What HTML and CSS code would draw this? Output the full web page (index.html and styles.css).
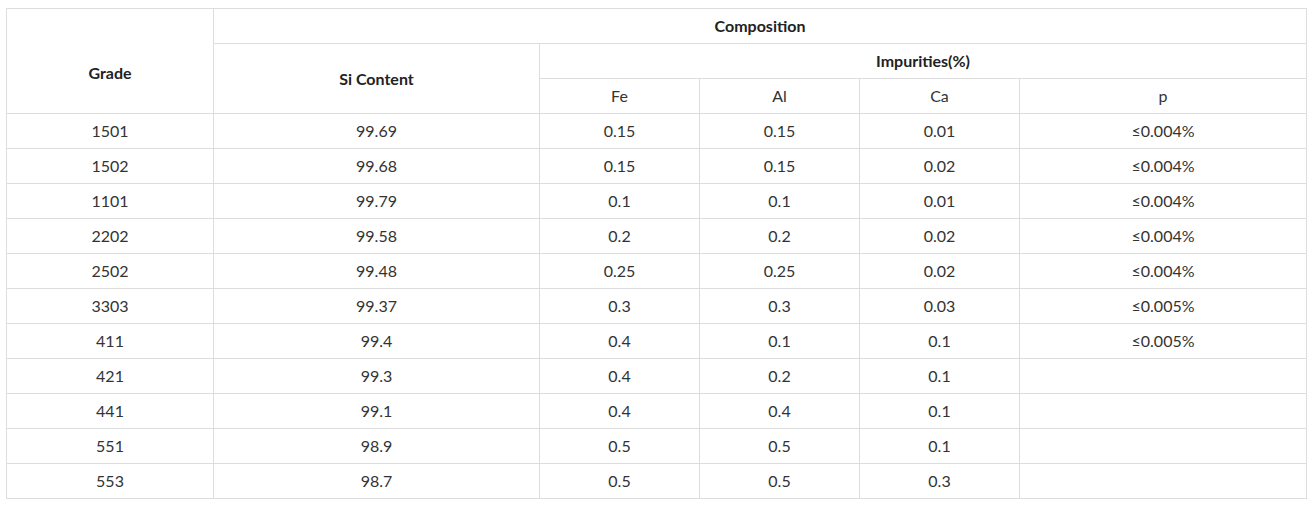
FILE: index.html
```html
<!DOCTYPE html>
<html>
<head>
<meta charset="utf-8">
<link rel="stylesheet" href="styles.css">
</head>
<body>
<table class="spec">
  <colgroup>
    <col class="c-grade"><col class="c-si"><col class="c-imp"><col class="c-imp"><col class="c-imp"><col class="c-p">
  </colgroup>
  <thead>
    <tr>
      <th rowspan="3" class="grade">Grade</th>
      <th colspan="5">Composition</th>
    </tr>
    <tr>
      <th rowspan="2">Si Content</th>
      <th colspan="4">Impurities(%)</th>
    </tr>
    <tr>
      <td>Fe</td><td>Al</td><td>Ca</td><td>p</td>
    </tr>
  </thead>
  <tbody>
    <tr><td>1501</td><td>99.69</td><td>0.15</td><td>0.15</td><td>0.01</td><td>≤0.004%</td></tr>
    <tr><td>1502</td><td>99.68</td><td>0.15</td><td>0.15</td><td>0.02</td><td>≤0.004%</td></tr>
    <tr><td>1101</td><td>99.79</td><td>0.1</td><td>0.1</td><td>0.01</td><td>≤0.004%</td></tr>
    <tr><td>2202</td><td>99.58</td><td>0.2</td><td>0.2</td><td>0.02</td><td>≤0.004%</td></tr>
    <tr><td>2502</td><td>99.48</td><td>0.25</td><td>0.25</td><td>0.02</td><td>≤0.004%</td></tr>
    <tr><td>3303</td><td>99.37</td><td>0.3</td><td>0.3</td><td>0.03</td><td>≤0.005%</td></tr>
    <tr><td>411</td><td>99.4</td><td>0.4</td><td>0.1</td><td>0.1</td><td>≤0.005%</td></tr>
    <tr><td>421</td><td>99.3</td><td>0.4</td><td>0.2</td><td>0.1</td><td></td></tr>
    <tr><td>441</td><td>99.1</td><td>0.4</td><td>0.4</td><td>0.1</td><td></td></tr>
    <tr><td>551</td><td>98.9</td><td>0.5</td><td>0.5</td><td>0.1</td><td></td></tr>
    <tr><td>553</td><td>98.7</td><td>0.5</td><td>0.5</td><td>0.3</td><td></td></tr>
  </tbody>
</table>
</body>
</html>
```
FILE: styles.css
```css
html, body {
  background: #fff;
}
body {
  margin: 8px 6px;
  font-family: Lato, "Liberation Sans", sans-serif;
  font-size: 16px;
  color: #333;
}
.spec {
  width: 1301px;
  border-collapse: collapse;
  table-layout: fixed;
}
.c-grade { width: 207px; }
.c-si { width: 326px; }
.c-imp { width: 160px; }
.c-p { width: 287px; }
.spec th,
.spec td {
  border: 1px solid #dddddd;
  height: 35px;
  padding: 0 4px;
  text-align: center;
  vertical-align: middle;
  line-height: 18px;
  box-sizing: border-box;
}
.spec th {
  font-weight: bold;
  color: #222;
}
.spec th.grade {
  padding-top: 23px;
}
```
